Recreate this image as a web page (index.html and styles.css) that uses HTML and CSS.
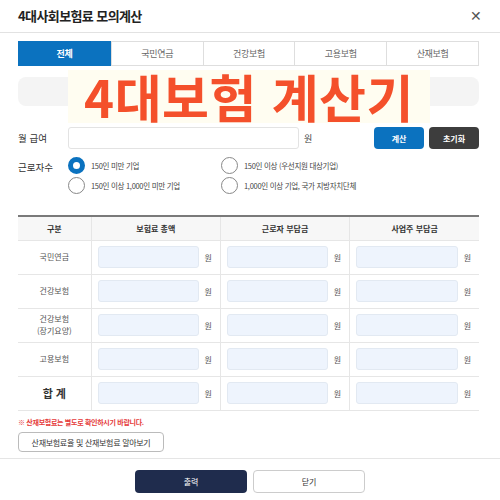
FILE: index.html
```html
<!DOCTYPE html>
<html lang="ko">
<head>
  <meta charset="UTF-8">
  <title>4대사회보험료 모의계산</title>
  <link rel="stylesheet" href="styles.css">
</head>
<body>
  <!-- Header -->
  <div class="header">
    <h1>4대사회보험료 모의계산</h1>
    <span class="close">&#x2715;</span>
  </div>

  <div class="content">
    <!-- Tabs -->
    <div class="tabs">
      <div class="tab active">전체</div>
      <div class="tab">국민연금</div>
      <div class="tab">건강보험</div>
      <div class="tab">고용보험</div>
      <div class="tab">산재보험</div>
    </div>

    <div class="banner">
      <div class="banner-title">4대보험 계산기</div>
    </div>

    <!-- Salary -->
    <div class="salary">
      <span class="label">월 급여</span>
      <input class="salary-input" type="text">
      <span class="won">원</span>
      <button class="btn-calc">계산</button>
      <button class="btn-reset">초기화</button>
    </div>

    <!-- Workers -->
    <div class="workers">
      <span class="label">근로자수</span>
      <div class="radios">
        <label class="radio checked"><span class="dot"></span>150인 미만 기업</label>
        <label class="radio"><span class="dot"></span>150인 이상 (우선지원 대상기업)</label>
        <label class="radio"><span class="dot"></span>150인 이상 1,000인 미만 기업</label>
        <label class="radio"><span class="dot"></span>1,000인 이상 기업, 국가 지방자치단체</label>
      </div>
    </div>

    <!-- Result table -->
    <table class="result">
      <colgroup>
        <col class="w-name">
        <col class="w-amt">
        <col class="w-amt">
        <col class="w-amt">
      </colgroup>
      <thead>
        <tr>
          <th>구분</th>
          <th>보험료 총액</th>
          <th>근로자 부담금</th>
          <th>사업주 부담금</th>
        </tr>
      </thead>
      <tbody>
        <tr>
          <td class="col-name">국민연금</td>
          <td><div class="cell"><span class="box"></span>원</div></td>
          <td><div class="cell"><span class="box"></span>원</div></td>
          <td><div class="cell"><span class="box"></span>원</div></td>
        </tr>
        <tr>
          <td class="col-name">건강보험</td>
          <td><div class="cell"><span class="box"></span>원</div></td>
          <td><div class="cell"><span class="box"></span>원</div></td>
          <td><div class="cell"><span class="box"></span>원</div></td>
        </tr>
        <tr>
          <td class="col-name">건강보험<br>(장기요양)</td>
          <td><div class="cell"><span class="box"></span>원</div></td>
          <td><div class="cell"><span class="box"></span>원</div></td>
          <td><div class="cell"><span class="box"></span>원</div></td>
        </tr>
        <tr>
          <td class="col-name">고용보험</td>
          <td><div class="cell"><span class="box"></span>원</div></td>
          <td><div class="cell"><span class="box"></span>원</div></td>
          <td><div class="cell"><span class="box"></span>원</div></td>
        </tr>
        <tr>
          <td class="col-name total">합 계</td>
          <td><div class="cell"><span class="box"></span>원</div></td>
          <td><div class="cell"><span class="box"></span>원</div></td>
          <td><div class="cell"><span class="box"></span>원</div></td>
        </tr>
      </tbody>
    </table>

    <p class="notice">※ 산재보험료는 별도로 확인하시기 바랍니다.</p>
    <button class="btn-link">산재보험료율 및 산재보험료 알아보기</button>
  </div>

  <!-- Footer -->
  <div class="footer">
    <button class="btn-print">출력</button>
    <button class="btn-close">닫기</button>
  </div>
</body>
</html>
```

FILE: styles.css
```css
* {
  margin: 0;
  padding: 0;
  box-sizing: border-box;
}

body {
  font-family: "Noto Sans CJK KR", "Noto Sans", sans-serif;
  background: #fff;
  color: #333;
  width: 500px;
  height: 500px;
  overflow: hidden;
}

/* Header */
.header {
  height: 33px;
  padding: 0 18px;
  display: flex;
  align-items: center;
  justify-content: space-between;
  border-bottom: 1px solid #e2e2e2;
}

.header h1 {
  font-size: 13px;
  font-weight: 700;
  color: #222;
  letter-spacing: -0.6px;
  margin-top: -2px;
}

.close {
  font-size: 14px;
  color: #555;
  margin-top: -3px;
}

.content {
  padding: 8px 21px 0 18px;
}

/* Tabs */
.tabs {
  display: grid;
  grid-template-columns: repeat(5, 1fr);
  border: 1px solid #dedede;
  height: 25px;
}

.tab {
  font-size: 9px;
  color: #666;
  display: flex;
  align-items: center;
  justify-content: center;
  border-left: 1px solid #dedede;
  letter-spacing: -0.3px;
}

.tab:first-child {
  border-left: none;
}

.tab.active {
  background: #0b72bf;
  color: #fff;
  font-weight: 700;
  margin: -1px 0 -1px -1px;
}

/* Banner */
.banner {
  position: relative;
  height: 29px;
  margin-top: 11px;
  background: #f4f4f4;
  border-radius: 8px;
}

.banner-title {
  position: absolute;
  left: 50px;
  top: -7px;
  width: 362px;
  height: 53px;
  background: #fffdf1;
  color: #f4502b;
  font-size: 51px;
  font-weight: 700;
  line-height: 53px;
  text-align: center;
  letter-spacing: 0.5px;
}

/* Salary */
.salary {
  display: flex;
  align-items: center;
  margin-top: 21px;
  height: 22px;
}

.label {
  font-size: 9.5px;
  color: #333;
  width: 50px;
  flex-shrink: 0;
}

.salary-input {
  width: 231px;
  height: 22px;
  border: 1px solid #e3e3e3;
  border-radius: 3px;
}

.won {
  font-size: 9px;
  color: #444;
  margin-left: 5px;
  margin-right: auto;
}

.btn-calc,
.btn-reset {
  width: 50px;
  height: 22px;
  border: none;
  border-radius: 4px;
  color: #fff;
  font-size: 8px;
  font-weight: 700;
  font-family: inherit;
}

.btn-calc {
  background: #0b72bf;
}

.btn-reset {
  background: #3d3d3d;
  margin-left: 5px;
}

/* Workers */
.workers {
  display: flex;
  align-items: flex-start;
  margin-top: 8px;
}

.workers .label {
  margin-top: 3px;
}

.radios {
  display: grid;
  grid-template-columns: 153px 1fr;
  row-gap: 4px;
}

.radio {
  display: flex;
  align-items: center;
  font-size: 7.5px;
  color: #444;
  letter-spacing: -0.3px;
  height: 16px;
}

.dot {
  width: 17px;
  height: 17px;
  border: 1px solid #888;
  border-radius: 50%;
  margin-right: 6px;
  background: #fff;
}

.radio.checked .dot {
  border: 5px solid #0b72bf;
}

/* Result table */
.result {
  width: 461px;
  margin-top: 22px;
  table-layout: fixed;
  border-collapse: collapse;
  border-top: 2px solid #7a7a7a;
}

.w-name {
  width: 73px;
}

.w-amt {
  width: 129px;
}

.result th {
  height: 24px;
  background: #f7f7f7;
  font-size: 8px;
  font-weight: 700;
  color: #333;
  border-left: 1px solid #e6e6e6;
}

.result th:first-child,
.result td:first-child {
  border-left: none;
}

.result td {
  height: 34px;
  border-top: 1px solid #e6e6e6;
  border-left: 1px solid #e6e6e6;
  font-size: 8px;
  color: #555;
  text-align: center;
}

.result tr:last-child td {
  border-bottom: 1px solid #e6e6e6;
}

.result td.col-name {
  line-height: 12px;
}

.result td.total {
  font-size: 11px;
  font-weight: 700;
  color: #333;
}

.cell {
  display: flex;
  align-items: center;
  padding: 0 8px 0 6px;
  gap: 6px;
}

.box {
  flex: 1;
  height: 22px;
  background: #eef4fd;
  border: 1px solid #e2e9f2;
  border-radius: 3px;
}

.notice {
  margin-top: 6px;
  font-size: 7px;
  font-weight: 700;
  color: #e53a3a;
  letter-spacing: -0.3px;
}

.btn-link {
  margin-top: 2px;
  width: 146px;
  height: 20px;
  background: #fff;
  border: 1px solid #bbb;
  border-radius: 4px;
  font-size: 8px;
  font-family: inherit;
  color: #333;
  letter-spacing: -0.3px;
}

/* Footer */
.footer {
  margin-top: 6px;
  border-top: 1px solid #e5e5e5;
  display: flex;
  justify-content: center;
  gap: 6px;
  padding-top: 11px;
}

.btn-print,
.btn-close {
  width: 112px;
  height: 23px;
  border-radius: 4px;
  font-size: 8px;
  font-family: inherit;
}

.btn-print {
  background: #1f2c4d;
  color: #fff;
  border: none;
}

.btn-close {
  background: #fff;
  border: 1px solid #ccc;
  color: #333;
}
```
